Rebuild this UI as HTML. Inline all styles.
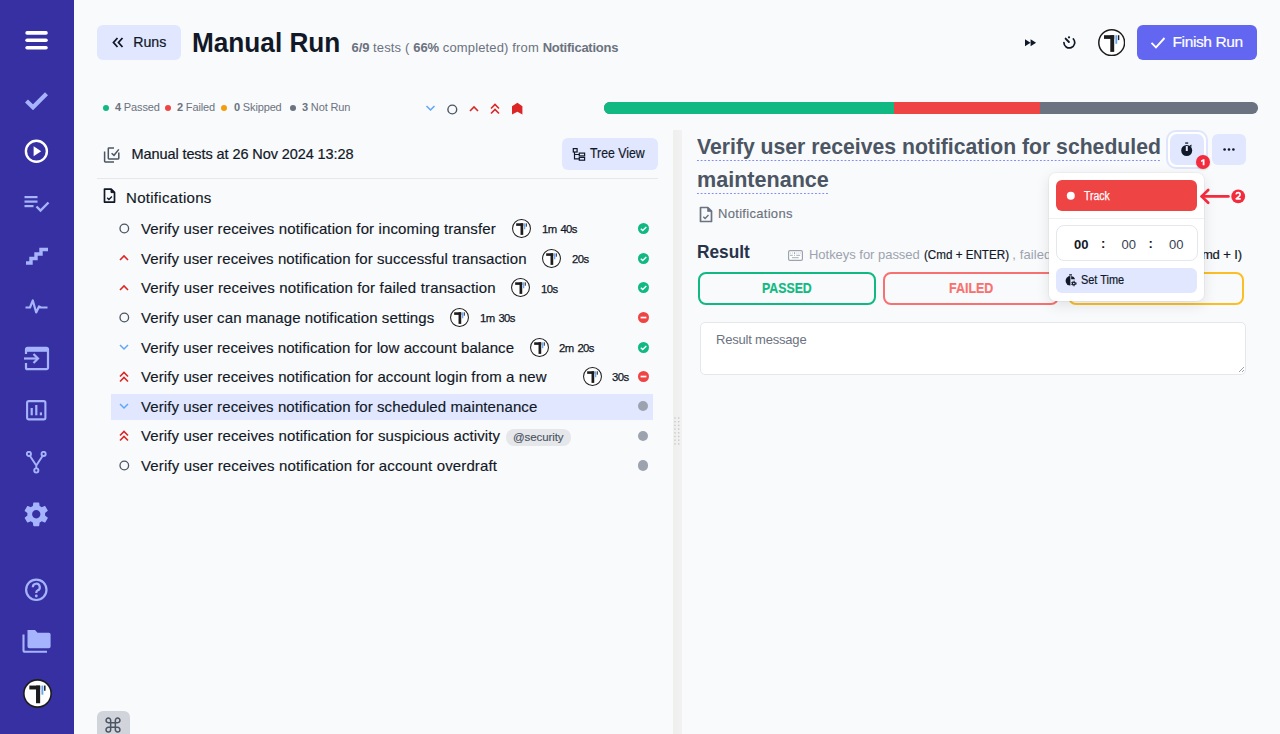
<!DOCTYPE html>
<html><head><meta charset="utf-8">
<style>
*{box-sizing:border-box;margin:0;padding:0}
html,body{width:1280px;height:734px;overflow:hidden;background:#f9fafb;font-family:"Liberation Sans",sans-serif;color:#111827}
.a{position:absolute}
.t{position:absolute;white-space:nowrap;line-height:1}
</style></head><body>

<div class="a" style="left:0;top:0;width:74px;height:734px;background:#3730a3"></div>
<svg class="a" style="left:25px;top:31px" width="23" height="19" viewBox="0 0 23 19"><rect x="0.3" y="0.1" width="22.5" height="3.6" rx="1.8" fill="#fff"/><rect x="0.3" y="7.5" width="22.5" height="3.6" rx="1.8" fill="#fff"/><rect x="0.3" y="14.9" width="22.5" height="3.6" rx="1.8" fill="#fff"/></svg>
<svg class="a" style="left:25px;top:91px" width="23" height="19" viewBox="0 0 23 19"><path d="M1.5 10 L8 16.3 L21.5 2.8" fill="none" stroke="#a5b4fc" stroke-width="4.2" stroke-linecap="butt"/></svg>
<svg class="a" style="left:24px;top:139px" width="25" height="25" viewBox="0 0 25 25"><circle cx="12.4" cy="12.3" r="10.5" fill="none" stroke="#fff" stroke-width="2.4"/><path d="M9.6 7.3 L17.2 12.3 L9.6 17.3 Z" fill="#fff"/></svg>
<svg class="a" style="left:24px;top:195px" width="26" height="18" viewBox="0 0 26 18"><rect x="0.5" y="1" width="13" height="2.2" fill="#a5b4fc"/><rect x="0.5" y="5.5" width="13" height="2.2" fill="#a5b4fc"/><rect x="0.5" y="10" width="9" height="2.2" fill="#a5b4fc"/><path d="M12.5 11.5 L16.5 15.5 L24.5 7.5" fill="none" stroke="#a5b4fc" stroke-width="2.4"/></svg>
<svg class="a" style="left:25px;top:246px" width="24" height="19" viewBox="0 0 24 19"><path d="M1 17 H6 V12.5 H11 V8 H16 V3.5 H23" fill="none" stroke="#a5b4fc" stroke-width="3.4"/></svg>
<svg class="a" style="left:25px;top:298px" width="23" height="17" viewBox="0 0 23 17"><path d="M0.5 9.5 H5 L7.8 2.5 L11.2 14.5 L14 8.5 L16 9.5 H22.5" fill="none" stroke="#a5b4fc" stroke-width="2.2" stroke-linejoin="round"/></svg>
<svg class="a" style="left:23px;top:346px" width="27" height="25" viewBox="0 0 27 25"><path d="M3 8 V3.3 A1.5 1.5 0 0 1 4.5 1.8 H23.5 A1.5 1.5 0 0 1 25 3.3 V21.7 A1.5 1.5 0 0 1 23.5 23.2 H4.5 A1.5 1.5 0 0 1 3 21.7 V17" fill="none" stroke="#a5b4fc" stroke-width="2.2"/><rect x="3" y="1.8" width="22" height="4" fill="#a5b4fc"/><path d="M1 12.5 H15" stroke="#a5b4fc" stroke-width="2.2"/><path d="M10.5 8 L15 12.5 L10.5 17" fill="none" stroke="#a5b4fc" stroke-width="2.2"/></svg>
<svg class="a" style="left:26px;top:400px" width="21" height="21" viewBox="0 0 21 21"><rect x="1.1" y="1.1" width="18.3" height="18.3" rx="1.6" fill="none" stroke="#a5b4fc" stroke-width="2.1"/><rect x="4.6" y="8" width="2.2" height="7.3" fill="#a5b4fc"/><rect x="9.2" y="5" width="2.2" height="10.3" fill="#a5b4fc"/><rect x="13.8" y="12.4" width="2.2" height="2.9" fill="#a5b4fc"/></svg>
<svg class="a" style="left:26px;top:451px" width="21" height="23" viewBox="0 0 21 23"><circle cx="2.9" cy="2.9" r="2.1" fill="none" stroke="#a5b4fc" stroke-width="1.9"/><circle cx="17.6" cy="2.9" r="2.1" fill="none" stroke="#a5b4fc" stroke-width="1.9"/><circle cx="10.3" cy="19.5" r="2.1" fill="none" stroke="#a5b4fc" stroke-width="1.9"/><path d="M4 4.9 L10.3 14.5 L16.5 4.9 M10.3 14.5 V17.4" fill="none" stroke="#a5b4fc" stroke-width="1.9" stroke-linejoin="round"/></svg>
<svg class="a" style="left:22.2px;top:500.4px" width="28.5" height="28.5" viewBox="0 0 24 24"><path fill="#a5b4fc" d="M19.4 13c.04-.33.06-.66.06-1s-.02-.67-.06-1l2.1-1.65c.19-.15.24-.42.12-.64l-2-3.46c-.12-.22-.39-.3-.61-.22l-2.49 1c-.52-.4-1.08-.73-1.69-.98l-.38-2.65C14.46 2.18 14.25 2 14 2h-4c-.25 0-.46.18-.49.42l-.38 2.65c-.61.25-1.17.59-1.69.98l-2.49-1c-.23-.09-.49 0-.61.22l-2 3.46c-.13.22-.07.49.12.64L4.57 11c-.04.33-.07.67-.07 1s.03.67.07 1l-2.11 1.65c-.19.15-.24.42-.12.64l2 3.46c.12.22.39.3.61.22l2.49-1c.52.4 1.08.73 1.69.98l.38 2.65c.03.24.24.42.49.42h4c.25 0 .46-.18.49-.42l.38-2.65c.61-.25 1.17-.59 1.69-.98l2.49 1c.23.09.49 0 .61-.22l2-3.46c.12-.22.07-.49-.12-.64L19.4 13zM12 15.5c-1.93 0-3.5-1.57-3.5-3.5s1.57-3.5 3.5-3.5 3.5 1.57 3.5 3.5-1.57 3.5-3.5 3.5z"/></svg>
<svg class="a" style="left:25px;top:578px" width="23" height="24" viewBox="0 0 23 24"><circle cx="11.3" cy="11.8" r="10.2" fill="none" stroke="#a5b4fc" stroke-width="2.2"/><path d="M7.8 9.2 A3.5 3.5 0 1 1 12.5 12.5 Q11.3 13 11.3 14.5 V15" fill="none" stroke="#a5b4fc" stroke-width="2.2"/><circle cx="11.3" cy="18" r="1.4" fill="#a5b4fc"/></svg>
<svg class="a" style="left:21.8px;top:629px" width="30" height="25" viewBox="0 0 30 25"><path d="M1.5 5.5 V21.2 Q1.5 22.8 3.1 22.8 H25" fill="none" stroke="#a5b4fc" stroke-width="2.1"/><path d="M5.5 1 H13 L15.5 3.8 H26.8 Q28.6 3.8 28.6 5.6 V17.5 Q28.6 19.3 26.8 19.3 H7.3 Q5.5 19.3 5.5 17.5 Z" fill="#a5b4fc"/></svg>
<svg class="a" style="left:22.7px;top:678.8px" width="29" height="29" viewBox="0 0 27.4 27.4"><circle cx="13.7" cy="13.7" r="12.9" fill="#fff" stroke="#1c1c1c" stroke-width="1.5"/><rect x="6" y="6.2" width="10.2" height="3.7" fill="#1c1c1c"/><rect x="12.3" y="6.2" width="3.9" height="16.7" fill="#1c1c1c"/><rect x="17.4" y="6.2" width="1.8" height="8.6" fill="#60a5fa"/><rect x="19.9" y="6.2" width="1.4" height="4.9" fill="#1c1c1c"/></svg>


<div class="a" style="left:97px;top:25px;width:84px;height:35px;border-radius:6px;background:#e0e7ff"></div>
<svg class="a" style="left:112px;top:37px" width="12" height="11" viewBox="0 0 12 11"><path d="M5.5 1 L1.5 5.5 L5.5 10 M10.5 1 L6.5 5.5 L10.5 10" fill="none" stroke="#111827" stroke-width="1.8"/></svg>
<div class="t" id="runs" style="left:133.3px;top:35.4px;font-size:14.2px;color:#111827;letter-spacing:-0.05px;-webkit-text-stroke:0.2px #111827">Runs</div>
<div class="t" id="title" style="left:192px;top:29px;font-size:28px;font-weight:bold;color:#111827;transform:scaleX(0.935);transform-origin:0 0">Manual Run</div>
<div class="t" id="sub" style="left:351.5px;top:41px;font-size:13px;color:#6b7280;letter-spacing:0.15px"><b style="letter-spacing:-0.1px">6/9</b> tests ( <b style="letter-spacing:-0.1px">66%</b> completed) from <b style="letter-spacing:-0.25px">Notifications</b></div>
<svg class="a" style="left:1025.2px;top:38.6px" width="12" height="8" viewBox="0 0 12 8"><path d="M0 0.3 L5.5 3.8 L0 7.3Z M5.6 0.3 L11.1 3.8 L5.6 7.3Z" fill="#111827"/></svg>
<svg class="a" style="left:1062px;top:35.5px" width="14" height="14" viewBox="0 0 14 14"><path d="M1.9 6.5 A5.4 5.4 0 1 0 11.4 3" fill="none" stroke="#111827" stroke-width="1.7" stroke-linecap="round"/><path d="M3.6 2.6 L6.9 6" stroke="#111827" stroke-width="1.9" stroke-linecap="round"/><circle cx="7" cy="1.3" r="1.1" fill="#111827"/></svg>
<svg class="a" style="left:1098px;top:29px" width="27.4" height="27.4" viewBox="0 0 27.4 27.4"><circle cx="13.7" cy="13.7" r="12.9" fill="#fff" stroke="#1c1c1c" stroke-width="1.5"/><rect x="6" y="6.2" width="10.2" height="3.7" fill="#1c1c1c"/><rect x="12.3" y="6.2" width="3.9" height="16.7" fill="#1c1c1c"/><rect x="17.4" y="6.2" width="1.8" height="8.6" fill="#60a5fa"/><rect x="19.9" y="6.2" width="1.4" height="4.9" fill="#1c1c1c"/></svg>
<div class="a" style="left:1137px;top:25px;width:120px;height:35px;border-radius:6px;background:#6366f1"></div>
<svg class="a" style="left:1150px;top:35px" width="16" height="15" viewBox="0 0 16 15"><path d="M1.5 7.8 L6 12.3 L14.5 3" fill="none" stroke="#fff" stroke-width="1.9"/></svg>
<div class="t" id="finish" style="left:1172.5px;top:34.4px;font-size:15.5px;color:#fff;letter-spacing:-0.38px;-webkit-text-stroke:0.2px #fff">Finish Run</div>


<div class="a" style="left:103px;top:104.5px;width:6px;height:6px;border-radius:3px;background:#10b981"></div>
<div class="a" style="left:165px;top:104.5px;width:6px;height:6px;border-radius:3px;background:#ef4444"></div>
<div class="a" style="left:221px;top:104.5px;width:6px;height:6px;border-radius:3px;background:#f59e0b"></div>
<div class="a" style="left:290px;top:104.5px;width:6px;height:6px;border-radius:3px;background:#6b7280"></div>
<div class="t" id="st1" style="left:115px;top:102px;font-size:11px;color:#6b7280;letter-spacing:-0.15px"><b>4</b> Passed</div>
<div class="t" id="st2" style="left:177px;top:102px;font-size:11px;color:#6b7280;letter-spacing:-0.15px"><b>2</b> Failed</div>
<div class="t" id="st3" style="left:234px;top:102px;font-size:11px;color:#6b7280;letter-spacing:-0.15px"><b>0</b> Skipped</div>
<div class="t" id="st4" style="left:302px;top:102px;font-size:11px;color:#6b7280;letter-spacing:-0.15px"><b>3</b> Not Run</div>
<svg class="a" style="left:425px;top:104.4px" width="11" height="8" viewBox="0 0 11 8"><path d="M1.5 2 L5.5 6 L9.5 2" fill="none" stroke="#60a5fa" stroke-width="1.5"/></svg>
<svg class="a" style="left:447.3px;top:103.5px" width="11" height="11" viewBox="0 0 11 11"><circle cx="5.3" cy="5.5" r="4.4" fill="none" stroke="#4b5563" stroke-width="1.4"/></svg>
<svg class="a" style="left:469.3px;top:104.5px" width="11" height="8" viewBox="0 0 11 8"><path d="M1 6 L5 2 L9 6" fill="none" stroke="#dc2626" stroke-width="1.6"/></svg>
<svg class="a" style="left:490.3px;top:102.6px" width="11" height="12" viewBox="0 0 11 12"><path d="M1 5.5 L5 1.5 L9 5.5 M1 10.5 L5 6.5 L9 10.5" fill="none" stroke="#dc2626" stroke-width="1.6"/></svg>
<svg class="a" style="left:511px;top:102px" width="12" height="13" viewBox="0 0 12 13"><path d="M6.4 0.7 L11.4 4.2 V12.4 L6.4 9.8 L1 12.4 V4.2 Z" fill="#dc2626"/></svg>
<div class="a" style="left:603.5px;top:102px;width:654px;height:11.5px;border-radius:5.75px;overflow:hidden;background:#6b7280">
  <div class="a" style="left:0;top:0;width:290.9px;height:11.5px;background:#10b981"></div>
  <div class="a" style="left:290.9px;top:0;width:145.3px;height:11.5px;background:#ef4444"></div>
</div>


<svg class="a" style="left:103px;top:147px" width="17" height="17" viewBox="0 0 17 17"><path d="M11 0.9 H6 Q5.3 0.9 5.3 1.6 V11.3 Q5.3 12 6 12 H15.1 Q15.8 12 15.8 11.3 V5.6" fill="none" stroke="#4b5563" stroke-width="1.5"/><path d="M8.6 6.2 L11 8.3 L15.8 2.4" fill="none" stroke="#4b5563" stroke-width="1.5"/><path d="M1.6 4.4 V14.2 Q1.6 14.9 2.3 14.9 H11" fill="none" stroke="#4b5563" stroke-width="1.5"/></svg>
<div class="t" id="mt" style="left:131.5px;top:146.5px;font-size:14.5px;color:#111827;letter-spacing:-0.09px;-webkit-text-stroke:0.2px #111827">Manual tests at 26 Nov 2024 13:28</div>
<div class="a" style="left:562px;top:138px;width:95.5px;height:31.5px;border-radius:6px;background:#e0e7ff"></div>
<svg class="a" style="left:572px;top:147px" width="14" height="14" viewBox="0 0 14 14"><rect x="1.3" y="1.6" width="3.8" height="3.4" fill="none" stroke="#111827" stroke-width="1.2"/><rect x="7.3" y="6.1" width="5.3" height="2.8" fill="none" stroke="#111827" stroke-width="1.2"/><rect x="7.3" y="10.4" width="5.3" height="2.8" fill="none" stroke="#111827" stroke-width="1.2"/><path d="M2.5 5 V11.8 H7.3 M2.5 7.5 H7.3" fill="none" stroke="#111827" stroke-width="1.2"/></svg>
<div class="t" id="tv" style="left:590.3px;top:146.8px;font-size:13.8px;color:#111827;transform:scaleX(0.89);transform-origin:0 0;-webkit-text-stroke:0.2px #111827">Tree View</div>
<div class="a" style="left:97px;top:178px;width:561px;height:1px;background:#e5e7eb"></div>
<svg class="a" style="left:103px;top:188px" width="13" height="16" viewBox="0 0 13 16"><path d="M1.5 1.1 H8.2 L11.5 4.4 V14.1 H1.5 Z" fill="none" stroke="#111827" stroke-width="1.7" stroke-linejoin="round"/><path d="M8 1.1 L11.5 4.6 H8 Z" fill="#111827" stroke="#111827" stroke-width="1"/><path d="M4.2 9.8 L5.9 11.4 L8.9 8.4" fill="none" stroke="#111827" stroke-width="1.4"/></svg>
<div class="t" id="notif" style="left:126px;top:189.5px;font-size:15px;color:#111827;letter-spacing:0.3px;-webkit-text-stroke:0.15px #111827">Notifications</div>
<div class="a" style="left:672.8px;top:130px;width:9.4px;height:604px;background:linear-gradient(to right,#efefed,#f0f0f0 60%,#f2f2f2)"></div>
<svg class="a" style="left:674px;top:416.5px" width="6" height="30" viewBox="0 0 6 30"><rect x="0.3" y="0.3" width="1.4" height="1.4" fill="#c9c9c9"/><rect x="4.0" y="0.3" width="1.4" height="1.4" fill="#c9c9c9"/><rect x="0.3" y="4.0" width="1.4" height="1.4" fill="#c9c9c9"/><rect x="4.0" y="4.0" width="1.4" height="1.4" fill="#c9c9c9"/><rect x="0.3" y="7.7" width="1.4" height="1.4" fill="#c9c9c9"/><rect x="4.0" y="7.7" width="1.4" height="1.4" fill="#c9c9c9"/><rect x="0.3" y="11.4" width="1.4" height="1.4" fill="#c9c9c9"/><rect x="4.0" y="11.4" width="1.4" height="1.4" fill="#c9c9c9"/><rect x="0.3" y="15.1" width="1.4" height="1.4" fill="#c9c9c9"/><rect x="4.0" y="15.1" width="1.4" height="1.4" fill="#c9c9c9"/><rect x="0.3" y="18.8" width="1.4" height="1.4" fill="#c9c9c9"/><rect x="4.0" y="18.8" width="1.4" height="1.4" fill="#c9c9c9"/><rect x="0.3" y="22.5" width="1.4" height="1.4" fill="#c9c9c9"/><rect x="4.0" y="22.5" width="1.4" height="1.4" fill="#c9c9c9"/><rect x="0.3" y="26.2" width="1.4" height="1.4" fill="#c9c9c9"/><rect x="4.0" y="26.2" width="1.4" height="1.4" fill="#c9c9c9"/></svg>

<div class="a" style="left:111px;top:393.5px;width:542px;height:26px;background:#e0e7ff"></div>
<svg class="a" style="left:119px;top:223.0px" width="11" height="11" viewBox="0 0 11 11"><circle cx="5.3" cy="5.5" r="4.3" fill="none" stroke="#4b5563" stroke-width="1.3"/></svg>
<div class="t" id="r0" style="left:141px;top:221.0px;font-size:15px;color:#111827;letter-spacing:0.13px;-webkit-text-stroke:0.15px #111827">Verify user receives notification for incoming transfer</div>
<svg class="a" style="left:512px;top:219.0px" width="19" height="19" viewBox="0 0 27.4 27.4"><circle cx="13.7" cy="13.7" r="12.9" fill="#fff" stroke="#1c1c1c" stroke-width="1.5"/><rect x="6" y="6.2" width="10.2" height="3.7" fill="#1c1c1c"/><rect x="12.3" y="6.2" width="3.9" height="16.7" fill="#1c1c1c"/><rect x="17.4" y="6.2" width="1.8" height="8.6" fill="#60a5fa"/><rect x="19.9" y="6.2" width="1.4" height="4.9" fill="#1c1c1c"/></svg>
<div class="t" id="d0" style="left:542px;top:224.3px;font-size:11.3px;color:#111827;letter-spacing:-0.55px;word-spacing:1.2px;-webkit-text-stroke:0.25px #111827">1m 40s</div>
<svg class="a" style="left:637.5px;top:223.0px" width="11" height="11" viewBox="0 0 11 11"><circle cx="5.5" cy="5.5" r="5.5" fill="#10b981"/><path d="M2.8 5.7 L4.7 7.5 L8.3 3.9" fill="none" stroke="#fff" stroke-width="1.4"/></svg>
<svg class="a" style="left:119px;top:254.1px" width="10" height="8" viewBox="0 0 10 8"><path d="M1 6 L5 2 L9 6" fill="none" stroke="#dc2626" stroke-width="1.6"/></svg>
<div class="t" id="r1" style="left:141px;top:250.6px;font-size:15px;color:#111827;letter-spacing:0.09px;-webkit-text-stroke:0.15px #111827">Verify user receives notification for successful transaction</div>
<svg class="a" style="left:542px;top:248.6px" width="19" height="19" viewBox="0 0 27.4 27.4"><circle cx="13.7" cy="13.7" r="12.9" fill="#fff" stroke="#1c1c1c" stroke-width="1.5"/><rect x="6" y="6.2" width="10.2" height="3.7" fill="#1c1c1c"/><rect x="12.3" y="6.2" width="3.9" height="16.7" fill="#1c1c1c"/><rect x="17.4" y="6.2" width="1.8" height="8.6" fill="#60a5fa"/><rect x="19.9" y="6.2" width="1.4" height="4.9" fill="#1c1c1c"/></svg>
<div class="t" id="d1" style="left:572px;top:253.9px;font-size:11.3px;color:#111827;letter-spacing:-0.55px;word-spacing:1.2px;-webkit-text-stroke:0.25px #111827">20s</div>
<svg class="a" style="left:637.5px;top:252.6px" width="11" height="11" viewBox="0 0 11 11"><circle cx="5.5" cy="5.5" r="5.5" fill="#10b981"/><path d="M2.8 5.7 L4.7 7.5 L8.3 3.9" fill="none" stroke="#fff" stroke-width="1.4"/></svg>
<svg class="a" style="left:119px;top:283.7px" width="10" height="8" viewBox="0 0 10 8"><path d="M1 6 L5 2 L9 6" fill="none" stroke="#dc2626" stroke-width="1.6"/></svg>
<div class="t" id="r2" style="left:141px;top:280.2px;font-size:15px;color:#111827;letter-spacing:0.157px;-webkit-text-stroke:0.15px #111827">Verify user receives notification for failed transaction</div>
<svg class="a" style="left:511px;top:278.2px" width="19" height="19" viewBox="0 0 27.4 27.4"><circle cx="13.7" cy="13.7" r="12.9" fill="#fff" stroke="#1c1c1c" stroke-width="1.5"/><rect x="6" y="6.2" width="10.2" height="3.7" fill="#1c1c1c"/><rect x="12.3" y="6.2" width="3.9" height="16.7" fill="#1c1c1c"/><rect x="17.4" y="6.2" width="1.8" height="8.6" fill="#60a5fa"/><rect x="19.9" y="6.2" width="1.4" height="4.9" fill="#1c1c1c"/></svg>
<div class="t" id="d2" style="left:541px;top:283.5px;font-size:11.3px;color:#111827;letter-spacing:-0.55px;word-spacing:1.2px;-webkit-text-stroke:0.25px #111827">10s</div>
<svg class="a" style="left:637.5px;top:282.2px" width="11" height="11" viewBox="0 0 11 11"><circle cx="5.5" cy="5.5" r="5.5" fill="#10b981"/><path d="M2.8 5.7 L4.7 7.5 L8.3 3.9" fill="none" stroke="#fff" stroke-width="1.4"/></svg>
<svg class="a" style="left:119px;top:311.9px" width="11" height="11" viewBox="0 0 11 11"><circle cx="5.3" cy="5.5" r="4.3" fill="none" stroke="#4b5563" stroke-width="1.3"/></svg>
<div class="t" id="r3" style="left:141px;top:309.9px;font-size:15px;color:#111827;letter-spacing:0.09px;-webkit-text-stroke:0.15px #111827">Verify user can manage notification settings</div>
<svg class="a" style="left:450px;top:307.9px" width="19" height="19" viewBox="0 0 27.4 27.4"><circle cx="13.7" cy="13.7" r="12.9" fill="#fff" stroke="#1c1c1c" stroke-width="1.5"/><rect x="6" y="6.2" width="10.2" height="3.7" fill="#1c1c1c"/><rect x="12.3" y="6.2" width="3.9" height="16.7" fill="#1c1c1c"/><rect x="17.4" y="6.2" width="1.8" height="8.6" fill="#60a5fa"/><rect x="19.9" y="6.2" width="1.4" height="4.9" fill="#1c1c1c"/></svg>
<div class="t" id="d3" style="left:480px;top:313.2px;font-size:11.3px;color:#111827;letter-spacing:-0.55px;word-spacing:1.2px;-webkit-text-stroke:0.25px #111827">1m 30s</div>
<svg class="a" style="left:637.5px;top:311.9px" width="11" height="11" viewBox="0 0 11 11"><circle cx="5.5" cy="5.5" r="5.5" fill="#ef4444"/><rect x="2.6" y="4.7" width="5.8" height="1.7" fill="#fff"/></svg>
<svg class="a" style="left:119px;top:343.0px" width="10" height="8" viewBox="0 0 10 8"><path d="M1 2 L5 6 L9 2" fill="none" stroke="#60a5fa" stroke-width="1.5"/></svg>
<div class="t" id="r4" style="left:141px;top:339.5px;font-size:15px;color:#111827;letter-spacing:0.08px;-webkit-text-stroke:0.15px #111827">Verify user receives notification for low account balance</div>
<svg class="a" style="left:530px;top:337.5px" width="19" height="19" viewBox="0 0 27.4 27.4"><circle cx="13.7" cy="13.7" r="12.9" fill="#fff" stroke="#1c1c1c" stroke-width="1.5"/><rect x="6" y="6.2" width="10.2" height="3.7" fill="#1c1c1c"/><rect x="12.3" y="6.2" width="3.9" height="16.7" fill="#1c1c1c"/><rect x="17.4" y="6.2" width="1.8" height="8.6" fill="#60a5fa"/><rect x="19.9" y="6.2" width="1.4" height="4.9" fill="#1c1c1c"/></svg>
<div class="t" id="d4" style="left:559px;top:342.8px;font-size:11.3px;color:#111827;letter-spacing:-0.55px;word-spacing:1.2px;-webkit-text-stroke:0.25px #111827">2m 20s</div>
<svg class="a" style="left:637.5px;top:341.5px" width="11" height="11" viewBox="0 0 11 11"><circle cx="5.5" cy="5.5" r="5.5" fill="#10b981"/><path d="M2.8 5.7 L4.7 7.5 L8.3 3.9" fill="none" stroke="#fff" stroke-width="1.4"/></svg>
<svg class="a" style="left:119px;top:370.6px" width="10" height="12" viewBox="0 0 10 12"><path d="M1 5.5 L5 1.5 L9 5.5 M1 10.5 L5 6.5 L9 10.5" fill="none" stroke="#dc2626" stroke-width="1.6"/></svg>
<div class="t" id="r5" style="left:141px;top:369.1px;font-size:15px;color:#111827;letter-spacing:0.1px;-webkit-text-stroke:0.15px #111827">Verify user receives notification for account login from a new</div>
<svg class="a" style="left:583px;top:367.1px" width="19" height="19" viewBox="0 0 27.4 27.4"><circle cx="13.7" cy="13.7" r="12.9" fill="#fff" stroke="#1c1c1c" stroke-width="1.5"/><rect x="6" y="6.2" width="10.2" height="3.7" fill="#1c1c1c"/><rect x="12.3" y="6.2" width="3.9" height="16.7" fill="#1c1c1c"/><rect x="17.4" y="6.2" width="1.8" height="8.6" fill="#60a5fa"/><rect x="19.9" y="6.2" width="1.4" height="4.9" fill="#1c1c1c"/></svg>
<div class="t" id="d5" style="left:612px;top:372.4px;font-size:11.3px;color:#111827;letter-spacing:-0.55px;word-spacing:1.2px;-webkit-text-stroke:0.25px #111827">30s</div>
<svg class="a" style="left:637.5px;top:371.1px" width="11" height="11" viewBox="0 0 11 11"><circle cx="5.5" cy="5.5" r="5.5" fill="#ef4444"/><rect x="2.6" y="4.7" width="5.8" height="1.7" fill="#fff"/></svg>
<svg class="a" style="left:119px;top:402.2px" width="10" height="8" viewBox="0 0 10 8"><path d="M1 2 L5 6 L9 2" fill="none" stroke="#60a5fa" stroke-width="1.5"/></svg>
<div class="t" id="r6" style="left:141px;top:398.7px;font-size:15px;color:#111827;letter-spacing:0.09px;-webkit-text-stroke:0.15px #111827">Verify user receives notification for scheduled maintenance</div>
<div class="a" style="left:637.7px;top:400.9px;width:10.6px;height:10.6px;border-radius:6px;background:#9ca3af"></div>
<svg class="a" style="left:119px;top:429.8px" width="10" height="12" viewBox="0 0 10 12"><path d="M1 5.5 L5 1.5 L9 5.5 M1 10.5 L5 6.5 L9 10.5" fill="none" stroke="#dc2626" stroke-width="1.6"/></svg>
<div class="t" id="r7" style="left:141px;top:428.3px;font-size:15px;color:#111827;letter-spacing:0.115px;-webkit-text-stroke:0.15px #111827">Verify user receives notification for suspicious activity</div>
<div class="a" style="left:637.7px;top:430.5px;width:10.6px;height:10.6px;border-radius:6px;background:#9ca3af"></div>
<svg class="a" style="left:119px;top:460.0px" width="11" height="11" viewBox="0 0 11 11"><circle cx="5.3" cy="5.5" r="4.3" fill="none" stroke="#4b5563" stroke-width="1.3"/></svg>
<div class="t" id="r8" style="left:141px;top:458.0px;font-size:15px;color:#111827;letter-spacing:0.138px;-webkit-text-stroke:0.15px #111827">Verify user receives notification for account overdraft</div>
<div class="a" style="left:637.7px;top:460.2px;width:10.6px;height:10.6px;border-radius:6px;background:#9ca3af"></div>
<div class="a" style="left:505.5px;top:429px;width:65.5px;height:16.5px;border-radius:8px;background:#e5e7eb"></div>
<div class="t" id="tag" style="left:513px;top:431.5px;font-size:11.5px;color:#4b5563;letter-spacing:-0.1px;-webkit-text-stroke:0.15px #4b5563">@security</div>
<div class="a" style="left:97px;top:711.3px;width:33px;height:30px;border-radius:6px;background:#d1d5db"></div>
<svg class="a" style="left:105.3px;top:716.5px" width="16" height="16" viewBox="0 0 16 16"><path d="M5.65 5.65 V3.35 A2.3 2.3 0 1 0 3.35 5.65 H12.65 A2.3 2.3 0 1 0 10.35 3.35 V12.65 A2.3 2.3 0 1 0 12.65 10.35 H3.35 A2.3 2.3 0 1 0 5.65 12.65 Z" fill="none" stroke="#4b5563" stroke-width="1.5"/></svg>


<div class="t" id="h1" style="left:697px;top:136px;font-size:22px;font-weight:bold;color:#4b5563;transform:scaleX(0.963);transform-origin:0 0">Verify user receives notification for scheduled</div>
<div class="a" style="left:696.5px;top:159.5px;width:464px;height:1px;background-image:linear-gradient(to right,#818cf8 55%,transparent 55%);background-size:3.7px 1px"></div>
<div class="t" id="h2" style="left:697px;top:169px;font-size:22px;font-weight:bold;color:#4b5563;transform:scaleX(0.98);transform-origin:0 0">maintenance</div>
<div class="a" style="left:696.5px;top:193px;width:131px;height:1px;background-image:linear-gradient(to right,#818cf8 55%,transparent 55%);background-size:3.7px 1px"></div>
<svg class="a" style="left:699px;top:206px" width="14" height="17" viewBox="0 0 14 17"><path d="M1.5 1.5 H8.8 L12.5 5.2 V15.5 H1.5 Z" fill="none" stroke="#6b7280" stroke-width="1.7" stroke-linejoin="round"/><path d="M8.6 1.5 L12.5 5.4 H8.6 Z" fill="#6b7280" stroke="#6b7280" stroke-width="0.8" stroke-linejoin="round"/><path d="M4.3 10.8 L6.1 12.5 L9.5 9" fill="none" stroke="#6b7280" stroke-width="1.4"/></svg>
<div class="t" id="nf2" style="left:718px;top:207.3px;font-size:13px;color:#6b7280;letter-spacing:0.3px;-webkit-text-stroke:0.15px #6b7280">Notifications</div>

<div class="a" style="left:1166.2px;top:130.4px;width:41.6px;height:38.4px;border-radius:10px;background:#fff;border:2.4px solid #dfe5fd"></div>
<div class="a" style="left:1169.5px;top:133.6px;width:34.7px;height:31.4px;border-radius:7px;background:#e0e7ff"></div>
<svg class="a" style="left:1180px;top:142px" width="13" height="14" viewBox="0 0 13 14"><rect x="5.2" y="0.4" width="3" height="1.3" fill="#111827"/><circle cx="6.7" cy="8.5" r="5.5" fill="#111827"/><path d="M9.5 3.8 L11.6 2.4 L11.2 5.2 Z" fill="#111827"/><rect x="5.8" y="4" width="2" height="5" fill="#e0e7ff"/></svg>
<div class="a" style="left:1196px;top:155.3px;width:13.6px;height:13.6px;border-radius:7px;background:#f42a3d;box-shadow:0 1px 2px rgba(0,0,0,.15)"></div>
<svg class="a" style="left:1196px;top:155.3px" width="14" height="14" viewBox="0 0 14 14"><path d="M5 5.4 L7.1 4.2 H8.5 V10.2 H6.7 V6.3 L5 7.1 Z" fill="#fff"/></svg>
<div class="a" style="left:1212px;top:133.5px;width:34px;height:31.5px;border-radius:6px;background:#e0e7ff"></div>
<svg class="a" style="left:1223px;top:146.5px" width="12" height="5" viewBox="0 0 12 5"><circle cx="1.6" cy="2.5" r="1.3" fill="#111827"/><circle cx="6" cy="2.5" r="1.3" fill="#111827"/><circle cx="10.4" cy="2.5" r="1.3" fill="#111827"/></svg>

<div class="t" id="res" style="left:697px;top:242.7px;font-size:18.8px;font-weight:bold;color:#27334a;transform:scaleX(0.92);transform-origin:0 0">Result</div>
<svg class="a" style="left:788px;top:250px" width="15" height="11" viewBox="0 0 15 11"><rect x="0.6" y="0.6" width="13.8" height="9.7" rx="1.3" fill="#fff" stroke="#9ca3af" stroke-width="1.2"/><path d="M2.4 2.2 V4 M4.4 2.2 V4 M8.8 2.2 V4 M10.8 2.2 V4 M12.5 2.2 V4" stroke="#dde0e5" stroke-width="1"/><path d="M6.6 2.2 V4" stroke="#9ca3af" stroke-width="1"/><path d="M2 5.3 H4.8 M6 5.3 H7 M8.3 5.3 H12.2" stroke="#9ca3af" stroke-width="0.9"/><path d="M4.3 7.7 H10.3" stroke="#9ca3af" stroke-width="0.9" stroke-linecap="round"/></svg>
<div class="t" id="hk" style="left:809px;top:248px;font-size:13px;color:#9ca3af;letter-spacing:-0.03px">Hotkeys for passed</div>
<div class="t" id="cmdE" style="left:923.5px;top:248px;font-size:13px;color:#111827;-webkit-text-stroke:0.2px #111827;transform:scaleX(0.895);transform-origin:0 0">(Cmd + ENTER)</div>
<div class="t" id="hk2" style="left:1012.3px;top:248px;font-size:13px;color:#9ca3af;letter-spacing:0.1px">, failed (Cmd + U) , skipped</div>
<div class="t" id="cmdI" style="right:38px;top:248px;font-size:13px;color:#111827;letter-spacing:-0.1px;-webkit-text-stroke:0.2px #111827">(Cmd + I)</div>

<div class="a" style="left:698px;top:271.8px;width:178px;height:33.3px;border:2px solid #10b981;border-radius:8px"></div>
<div class="t" id="pb" style="left:761.5px;top:281.3px;font-size:14.5px;font-weight:bold;color:#10b981;transform:scaleX(0.85);transform-origin:0 0;-webkit-text-stroke:0.2px #10b981">PASSED</div>
<div class="a" style="left:882.6px;top:271.8px;width:176.5px;height:33.3px;border:2px solid #f87171;border-radius:8px"></div>
<div class="t" id="fb" style="left:949px;top:281.3px;font-size:14.5px;font-weight:bold;color:#f87171;transform:scaleX(0.86);transform-origin:0 0;-webkit-text-stroke:0.2px #f87171">FAILED</div>
<div class="a" style="left:1067.7px;top:271.8px;width:176.5px;height:33.3px;border:2px solid #fbbf24;border-radius:8px"></div>

<div class="a" style="left:700px;top:322px;width:546px;height:52.5px;border:1px solid #e5e7eb;border-radius:5px;background:#fff"></div>
<div class="t" id="rm" style="left:716px;top:333px;font-size:13px;color:#6b7280;letter-spacing:-0.2px">Result message</div>
<svg class="a" style="left:1237px;top:365px" width="8" height="8" viewBox="0 0 8 8"><path d="M7 2 L2 7 M7 5 L5 7" stroke="#9ca3af" stroke-width="1"/></svg>

<div class="a" style="left:1048.6px;top:172.6px;width:155.5px;height:128.8px;border-radius:7px;background:#fff;box-shadow:0 4px 14px rgba(0,0,0,.10),0 0 0 1px rgba(0,0,0,.03)"></div>
<div class="a" style="left:1056.2px;top:180.3px;width:140.6px;height:30.5px;border-radius:6px;background:#ef4444"></div>
<svg class="a" style="left:1066px;top:191.4px" width="10" height="10" viewBox="0 0 10 10"><circle cx="4.8" cy="4.8" r="4" fill="#fff"/></svg>
<div class="t" id="trk" style="left:1084px;top:190px;font-size:12px;color:#fff;transform:scaleX(0.87);transform-origin:0 0;-webkit-text-stroke:0.25px #fff">Track</div>
<div class="a" style="left:1048.6px;top:218px;width:155.5px;height:1px;background:#eef0f3"></div>
<div class="a" style="left:1056.2px;top:225.3px;width:141.6px;height:36.2px;border:1px solid #e5e7eb;border-radius:8px;background:#fff"></div>
<div class="t" id="tm1" style="left:1074px;top:238px;font-size:13px;font-weight:bold;color:#111827">00</div>
<div class="t" style="left:1101px;top:237px;font-size:13px;font-weight:bold;color:#111827">:</div>
<div class="t" id="tm2" style="left:1121.5px;top:238px;font-size:13px;color:#374151">00</div>
<div class="t" style="left:1148.5px;top:237px;font-size:13px;font-weight:bold;color:#111827">:</div>
<div class="t" id="tm3" style="left:1169px;top:238px;font-size:13px;color:#374151">00</div>
<div class="a" style="left:1056.2px;top:267.5px;width:140.6px;height:25.7px;border-radius:6px;background:#e0e7ff"></div>
<svg class="a" style="left:1064px;top:273px" width="13" height="14" viewBox="0 0 13 14"><rect x="5.1" y="1.3" width="2.9" height="1.2" fill="#111827"/><path d="M6.4 3 A4.8 4.8 0 0 0 6.4 12.6 Z" fill="#111827"/><path d="M7.2 3.1 A4.8 4.8 0 0 1 11.2 6.3 L7.2 6.3 Z" fill="#111827"/><circle cx="9.8" cy="10.5" r="1.45" fill="none" stroke="#111827" stroke-width="1.3"/><circle cx="9.8" cy="10.5" r="2.35" fill="none" stroke="#111827" stroke-width="1" stroke-dasharray="1.1 1.36"/></svg>
<div class="t" id="set" style="left:1081px;top:274px;font-size:12px;color:#111827;transform:scaleX(0.91);transform-origin:0 0;-webkit-text-stroke:0.2px #111827">Set Time</div>

<svg class="a" style="left:1196px;top:184px" width="54" height="26" viewBox="0 0 54 26"><path d="M5.8 12.4 H32.4" stroke="#f42a3d" stroke-width="2.7" stroke-linecap="round"/><path d="M12.2 6 L5.6 12.4 L12.2 18.8" fill="none" stroke="#f42a3d" stroke-width="2.7" stroke-linecap="round" stroke-linejoin="round"/><circle cx="42.2" cy="12.4" r="6.9" fill="#f42a3d"/><path d="M40.1 10.4 Q40.3 8.7 42.2 8.7 Q44.1 8.7 44.1 10.4 Q44.1 11.5 42.8 12.6 L40.2 14.8 H44.7" fill="none" stroke="#fff" stroke-width="1.7" stroke-linejoin="round"/></svg>

</body></html>
